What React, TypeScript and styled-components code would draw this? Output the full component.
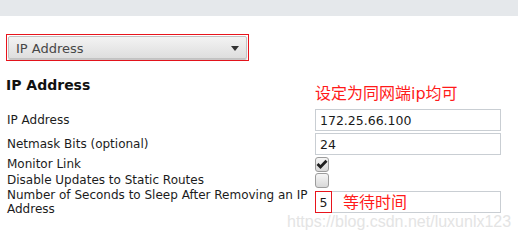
import React from 'react';
import styled, { createGlobalStyle } from 'styled-components';

const GlobalStyle = createGlobalStyle`
  html, body {
    margin: 0;
    padding: 0;
    background: #fff;
    font-family: "DejaVu Sans", "Noto Sans CJK SC", sans-serif;
    color: #1a1a1a;
  }
`;

interface Field {
  label: string;
  kind: 'text' | 'check';
  value?: string;
  checked?: boolean;
  narrow?: boolean;
}

const fields: Field[] = [
  { label: 'IP Address', kind: 'text', value: '172.25.66.100' },
  { label: 'Netmask Bits (optional)', kind: 'text', value: '24' },
  { label: 'Monitor Link', kind: 'check', checked: true },
  { label: 'Disable Updates to Static Routes', kind: 'check', checked: false },
  { label: 'Number of Seconds to Sleep After Removing an IP Address', kind: 'text', value: '5', narrow: true },
];

export default function App() {
  return (
    <Page>
      <GlobalStyle />
      <TopBar />
      <Body>
        <SelectFrame>
          <SelectButton>
            <span>IP Address</span>
            <Caret />
          </SelectButton>
        </SelectFrame>
        <Heading>IP Address</Heading>
        <Form>
          {fields.map((f) => (
            <Row key={f.label} $tall={f.narrow} $check={f.kind === 'check'}>
              <Label>{f.label}</Label>
              <Cell>
                {f.kind === 'text' ? (
                  <TextBox>
                    {f.narrow ? <Marked>{f.value}</Marked> : f.value}
                  </TextBox>
                ) : (
                  <CheckBox>
                    {f.checked && (
                      <svg width="12" height="10" viewBox="0 0 12 10">
                        <path d="M1.5 5 L4.5 8 L10.5 1.8" fill="none" stroke="#202020" strokeWidth="2.8" strokeLinejoin="miter" />
                      </svg>
                    )}
                  </CheckBox>
                )}
              </Cell>
            </Row>
          ))}
        </Form>
        <NoteTop>设定为同网端ip均可</NoteTop>
        <NoteWait>等待时间</NoteWait>
        <Watermark>https://blog.csdn.net/luxunlx123</Watermark>
      </Body>
    </Page>
  );
}

const Page = styled.div`
  width: 518px;
  height: 242px;
  overflow: hidden;
  position: relative;
`;

const TopBar = styled.div`
  height: 16px;
  background: #e5e8eb;
`;

const Body = styled.div`
  padding: 18px 0 0 6px;
`;

const SelectFrame = styled.div`
  width: 239px;
  height: 24px;
  border: 1px solid #e8141c;
  padding: 1px 1px 0 1px;
`;

const SelectButton = styled.div`
  height: 23px;
  box-sizing: border-box;
  border: 1px solid #c2c2c2;
  border-radius: 2px;
  background: linear-gradient(#f3f3f3, #dedede);
  box-shadow: 0 1px 1px rgba(0, 0, 0, 0.25);
  display: flex;
  align-items: center;
  justify-content: space-between;
  padding: 1px 7px 0 7px;
  font-size: 13px;
  color: #474747;
`;

const Caret = styled.span`
  width: 0;
  height: 0;
  border-left: 4.5px solid transparent;
  border-right: 4.5px solid transparent;
  border-top: 5px solid #333;
`;

const Heading = styled.h2`
  margin: 16px 0 0 0;
  font-size: 14px;
  font-weight: bold;
  line-height: 17px;
  color: #111;
`;

const Form = styled.div`
  margin-top: 14px;
  width: 496px;
  display: flex;
  flex-direction: column;
`;

const Row = styled.div<{ $tall?: boolean; $check?: boolean }>`
  display: grid;
  grid-template-columns: 309px 186px;
  align-items: center;
  height: ${(p) => (p.$tall ? 28 : p.$check ? 16 : 24)}px;
`;

const Label = styled.div`
  font-size: 12px;
  line-height: 14px;
  padding-left: 1px;
  color: #1c1c1c;
`;

const Cell = styled.div`
  display: flex;
  align-items: center;
`;

const TextBox = styled.div`
  width: 186px;
  height: 22px;
  box-sizing: border-box;
  border: 1px solid #c9ced3;
  display: flex;
  align-items: center;
  padding-left: 4px;
  font-size: 12.5px;
  color: #1a1a1a;
`;

const Marked = styled.span`
  margin-left: -5px;
  width: 17px;
  height: 22px;
  box-sizing: border-box;
  border: 1px solid #e8141c;
  display: flex;
  align-items: center;
  justify-content: center;
`;

const CheckBox = styled.span`
  width: 14px;
  height: 15px;
  box-sizing: border-box;
  border: 1px solid #9c9c9c;
  border-radius: 3px;
  background: linear-gradient(#f6f6f6, #d8d8d8);
  display: flex;
  align-items: center;
  justify-content: center;
`;

const NoteTop = styled.div`
  position: absolute;
  left: 315px;
  top: 84px;
  font-size: 16px;
  line-height: 20px;
  color: #ff1a1a;
`;

const NoteWait = styled.div`
  position: absolute;
  left: 343px;
  top: 193px;
  font-size: 16px;
  line-height: 20px;
  color: #ff1a1a;
`;

const Watermark = styled.div`
  position: absolute;
  left: 287px;
  top: 212px;
  font-family: "Liberation Sans", Arial, sans-serif;
  font-size: 16px;
  line-height: 20px;
  color: #e4e4e4;
`;
